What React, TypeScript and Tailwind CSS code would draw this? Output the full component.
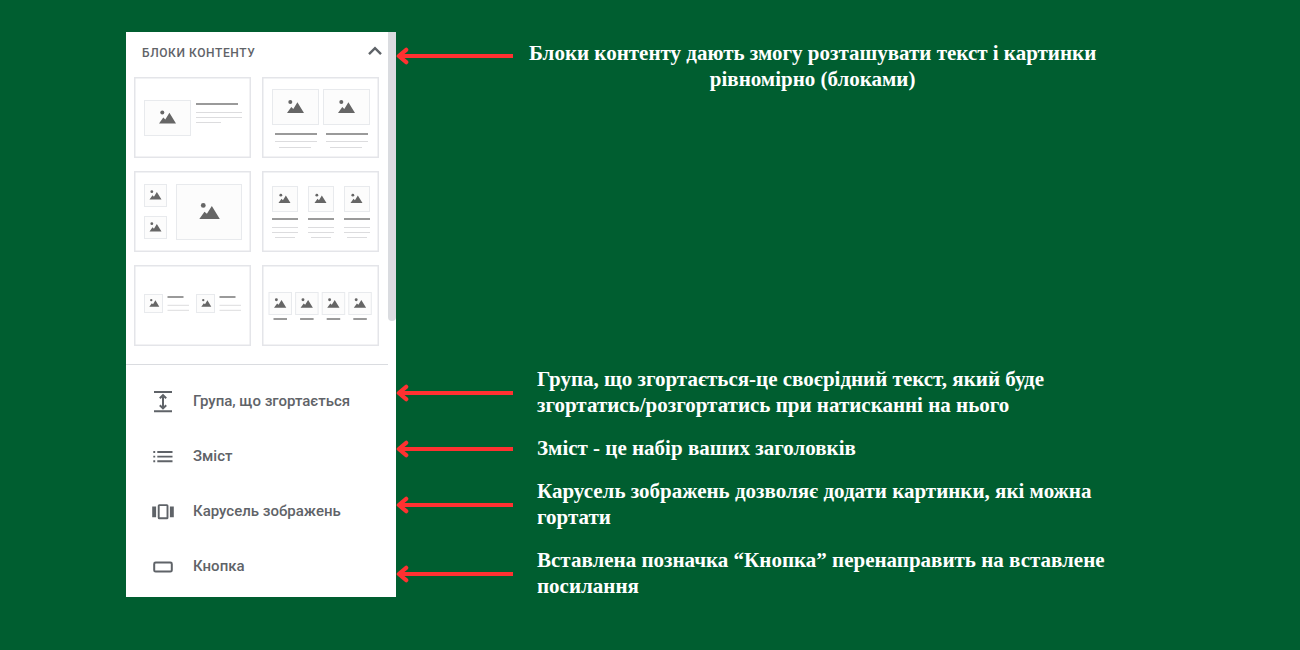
import type { ReactNode } from 'react';

type Box = { x: number; y: number; w: number; h: number };

function Picture({ x, y, w }: { x: number; y: number; w: number }) {
  return (
    <g transform={`translate(${x} ${y}) scale(${w / 17})`} fill="#666666">
      <circle cx="3.3" cy="2.4" r="2" />
      <path d="M0 13.6 L4.3 7.6 L6.3 9.4 L10.4 2.8 L17 13.6 Z" />
    </g>
  );
}

function Frame({ x, y, w, h }: Box) {
  return <rect x={x} y={y} width={w} height={h} fill="#fcfcfc" stroke="#e8eaed" />;
}

function Title({ x, y, w }: { x: number; y: number; w: number }) {
  return <rect x={x} y={y - 1} width={w} height="2" fill="#9a9a9a" />;
}

function Line({ x, y, w }: { x: number; y: number; w: number }) {
  return <rect x={x} y={y - 0.5} width={w} height="1" fill="#dcdcde" />;
}

const blocks: { label: string; art: ReactNode }[] = [
  {
    label: 'Картинка і текст',
    art: (
      <>
        <Frame x={10.5} y={23.5} w={46} h={35} />
        <Picture x={25} y={33} w={17} />
        <Title x={62} y={27} w={42} />
        <Line x={62} y={35.5} w={46} />
        <Line x={62} y={40.5} w={46} />
        <Line x={62} y={45.5} w={25} />
      </>
    ),
  },
  {
    label: 'Дві картинки з текстом',
    art: [0, 51].map((d) => (
      <g key={d}>
        <Frame x={10.5 + d} y={12.5} w={46} h={35} />
        <Picture x={25 + d} y={22.5} w={17} />
        <Title x={13 + d} y={57} w={42} />
        <Line x={13 + d} y={64.5} w={42} />
        <Line x={17 + d} y={70.5} w={32} />
      </g>
    )),
  },
  {
    label: 'Колаж',
    art: (
      <>
        <Frame x={10.5} y={13.5} w={22} h={22} />
        <Picture x={15.5} y={19} w={12} />
        <Frame x={10.5} y={45.5} w={22} h={22} />
        <Picture x={15.5} y={51} w={12} />
        <Frame x={42.5} y={13.5} w={65} h={55} />
        <Picture x={65.3} y={31.5} w={20.5} />
      </>
    ),
  },
  {
    label: 'Три картинки з текстом',
    art: [0, 36, 72].map((d) => (
      <g key={d}>
        <Frame x={10.5 + d} y={15.5} w={25} h={25} />
        <Picture x={16.5 + d} y={22.5} w={12} />
        <Title x={10 + d} y={48} w={26} />
        <Line x={10 + d} y={56.5} w={26} />
        <Line x={10 + d} y={61.5} w={26} />
        <Line x={13 + d} y={66.5} w={20} />
      </g>
    )),
  },
  {
    label: 'Дві малі картинки',
    art: [0, 52].map((d) => (
      <g key={d}>
        <Frame x={10.5 + d} y={29.5} w={18} h={18} />
        <Picture x={15.3 + d} y={33.7} w={10} />
        <Title x={33.5 + d} y={32} w={16} />
        <Line x={33.5 + d} y={40.3} w={21.5} />
        <Line x={33.5 + d} y={45.3} w={21.5} />
      </g>
    )),
  },
  {
    label: 'Чотири картинки',
    art: [0, 26.6, 53.2, 79.8].map((d) => (
      <g key={d}>
        <Frame x={7 + d} y={27.5} w={22.5} h={22} />
        <Picture x={12 + d} y={33} w={12.3} />
        <Title x={11.5 + d} y={54} w={13.5} />
      </g>
    )),
  },
];

const items: { label: string; icon: ReactNode }[] = [
  {
    label: 'Група, що згортається',
    icon: (
      <>
        <path d="M3 2h18M3 21.3h18M12 6.5v11" fill="none" stroke="currentColor" strokeWidth="2" />
        <path d="M8.8 8.3 12 5.2l3.2 3.1M8.8 15.3 12 18.4l3.2-3.1" fill="none" stroke="currentColor" strokeWidth="2" />
      </>
    ),
  },
  {
    label: 'Зміст',
    icon: (
      <path
        d="M2.3 6.1h1.9V8H2.3zM2.3 10.7h1.9v1.9H2.3zM2.3 15.3h1.9v1.9H2.3zM6.3 6.1h15.2V8H6.3zM6.3 10.7h15.2v1.9H6.3zM6.3 15.3h15.2v1.9H6.3z"
        fill="currentColor"
      />
    ),
  },
  {
    label: 'Карусель зображень',
    icon: (
      <>
        <path d="M1.2 6.6h3.9v10.6H1.2zM18.9 6.6h3.9v10.6h-3.9z" fill="currentColor" />
        <rect x="7.7" y="5.1" width="8.8" height="13.2" rx="0.6" fill="none" stroke="currentColor" strokeWidth="1.9" />
      </>
    ),
  },
  {
    label: 'Кнопка',
    icon: <rect x="3.2" y="7.6" width="17.6" height="9" rx="1.4" fill="none" stroke="currentColor" strokeWidth="2" />,
  },
];

function Arrow() {
  return (
    <svg viewBox="0 0 117 18" className="h-[18px] w-[117px] shrink-0" fill="none" stroke="#ff3131" aria-hidden="true">
      <path d="M3 9H117" strokeWidth="4" />
      <path d="M10.2 2.8 2.8 9l7.4 6.2" strokeWidth="4.2" strokeLinecap="round" strokeLinejoin="round" />
    </svg>
  );
}

function Note({ children }: { children: ReactNode }) {
  return (
    <div className="flex items-center gap-6">
      <div className="pt-[2px]">
        <Arrow />
      </div>
      <p>{children}</p>
    </div>
  );
}

export default function App() {
  return (
    <main className="flex min-h-screen items-start bg-[#005e30] py-8 pl-[126px] pr-8">
      <section className="flex w-[270px] shrink-0 bg-white font-['Roboto',sans-serif] text-[#5f6368]">
        <div className="min-w-0 flex-1 pb-[3px]">
          <div className="pb-[18px] pl-2 pr-[9px]">
            <header className="mb-[3px] flex h-[42px] items-center justify-between pl-2">
              <h2 className="text-xs font-medium tracking-wider">БЛОКИ КОНТЕНТУ</h2>
              <button type="button" aria-label="Згорнути" className="-mr-2 -mt-1">
                <svg viewBox="0 0 24 24" className="size-6" fill="none" stroke="currentColor" strokeWidth="2.4">
                  <path d="M6 15.2 12 9.2l6 6" />
                </svg>
              </button>
            </header>
            <div className="grid grid-cols-2 gap-x-[11px] gap-y-[13px]">
              {blocks.map((b) => (
                <button key={b.label} type="button" aria-label={b.label}>
                  <svg viewBox="0 0 117 81" className="block w-full" aria-hidden="true">
                    <rect x="0.75" y="0.75" width="115.5" height="79.5" fill="#fff" stroke="#e4e5e9" strokeWidth="1.5" />
                    {b.art}
                  </svg>
                </button>
              ))}
            </div>
          </div>
          <nav className="border-t border-[#dadce0] pt-[9px]">
            {items.map((item) => (
              <button
                key={item.label}
                type="button"
                className="flex h-[55px] w-full items-center gap-[18px] pl-[25px] text-left text-[15px] font-medium"
              >
                <svg viewBox="0 0 24 24" className="size-6 shrink-0" aria-hidden="true">
                  {item.icon}
                </svg>
                {item.label}
              </button>
            ))}
          </nav>
        </div>
        <div className="h-[289px] w-2 rounded-b bg-[#dadce0]" />
      </section>

      <section className="min-w-0 pt-2 font-['Liberation_Serif',serif] text-[21px]/[26px] font-bold text-white">
        <div className="flex items-start gap-4">
          <div className="pt-[7px]">
            <Arrow />
          </div>
          <p className="text-center">
            Блоки контенту дають змогу розташувати текст і картинки
            <br />
            рівномірно (блоками)
          </p>
        </div>
        <div className="mt-[274px] flex flex-col gap-[17px]">
          <Note>
            Група, що згортається-це своєрідний текст, який буде
            <br />
            згортатись/розгортатись при натисканні на нього
          </Note>
          <Note>Зміст - це набір ваших заголовків</Note>
          <Note>
            Карусель зображень дозволяє додати картинки, які можна
            <br />
            гортати
          </Note>
          <Note>
            Вставлена позначка “Кнопка” перенаправить на вставлене
            <br />
            посилання
          </Note>
        </div>
      </section>
    </main>
  );
}
